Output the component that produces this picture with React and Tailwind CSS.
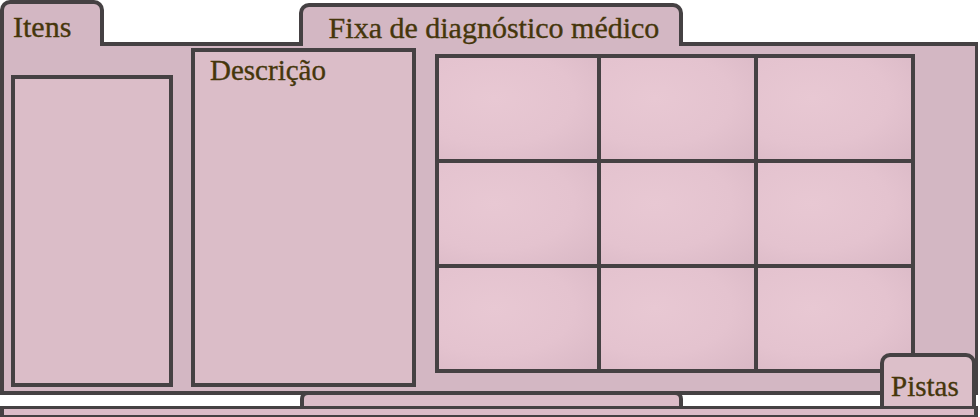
import React from "react";

const cells = Array.from({ length: 9 });

function Tab({ className, children }) {
  return (
    <div
      className={`relative z-10 border-4 border-b-0 border-[#454143] rounded-t-[10px] ${className}`}
    >
      {children}
    </div>
  );
}

export default function App() {
  return (
    <div className="relative w-[980px] h-[417px] overflow-hidden bg-white font-['Liberation_Serif',serif] text-[#45360b] [-webkit-text-stroke:0.35px_#45360b] text-[29px] leading-[28px]">
      {/* top tabs */}
      <div className="flex items-end h-[46px]">
        <Tab className="w-[104px] h-[46px] bg-[#d3b7c3] pl-[9px] pt-[9px] text-[30px]">Itens</Tab>
        <Tab className="ml-[195px] w-[384px] h-[43px] bg-[#d3b7c3] pt-[7px] pl-[6px] text-center text-[30px]">
          Fixa de diagnóstico médico
        </Tab>
      </div>

      {/* main window */}
      <div className="-mt-[4px] w-[978px] h-[353px] border-4 border-r-[3px] border-[#454143] bg-[#d3b7c3] flex items-start pl-[7px]">
        <div className="mt-[29px] w-[162px] h-[312px] border-4 border-[#454143] bg-[#dbbdc8]" />
        <div className="ml-[18px] mt-[2px] w-[225px] h-[339px] border-4 border-[#454143] bg-[#dbbdc8] pl-[15px] pt-[4px]">
          Descrição
        </div>
        <div className="ml-[19px] mt-[8px] w-[480px] h-[319px] bg-[#454143] p-[4px] grid grid-cols-[158px_1fr_1fr] grid-rows-3 gap-[4px]">
          {cells.map((_, i) => (
            <div
              key={i}
              className="bg-[radial-gradient(ellipse_at_35%_40%,#e8c8d3_0%,#e4c3cf_55%,#d9b8c5_100%)]"
            />
          ))}
        </div>
      </div>

      {/* lower window with its tab */}
      <div className="-mt-[4px] ml-[300px] w-[383px] h-[15px] border-4 border-b-0 border-[#454143] rounded-t-[8px] bg-[#dbbcc8]" />
      <div className="w-[978px] h-[20px] border-t-[3px] border-x-4 border-[#454143] bg-[#dbbcc8] pt-[6px]">
        <div className="h-[4px] bg-[#454143]" />
      </div>

      {/* Pistas tab sits over the main window's corner */}
      <div className="absolute left-[880px] top-[353px] w-[96px] h-[53px] border-4 border-b-0 border-[#454143] rounded-t-[10px] bg-[#dcbfc9] pl-[7px] pt-[15px]">
        Pistas
      </div>
    </div>
  );
}
